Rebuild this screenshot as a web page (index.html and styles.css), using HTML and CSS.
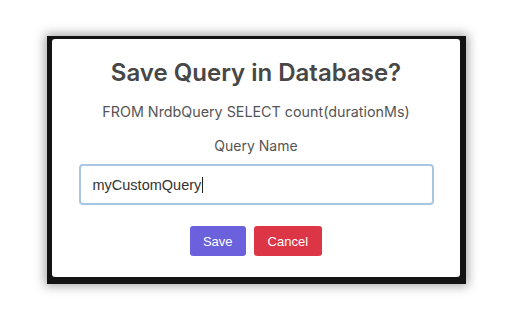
FILE: index.html
```html
<!DOCTYPE html>
<html>
<head>
<meta charset="utf-8">
<link rel="stylesheet" href="styles.css">
</head>
<body>
<div class="frame">
  <div class="dialog">
    <h1 class="title">Save Query in Database?</h1>
    <p class="query">FROM NrdbQuery SELECT count(durationMs)</p>
    <p class="label">Query Name</p>
    <div class="input"><span class="value">myCustomQuery</span><span class="caret"></span></div>
    <div class="actions">
      <button class="btn btn-save">Save</button>
      <button class="btn btn-cancel">Cancel</button>
    </div>
  </div>
</div>
</body>
</html>
```
FILE: styles.css
```css
html, body {
  margin: 0;
  padding: 0;
  background: #fff;
}
body {
  width: 512px;
  height: 320px;
  display: flex;
  align-items: center;
  justify-content: center;
}
.frame {
  background: #141414;
  padding: 3px 6px 7px 5px;
  box-shadow: 0 0 10px 2px rgba(0, 0, 0, 0.35);
  margin-left: 1px;
}
.dialog {
  width: 408px;
  height: 238px;
  box-sizing: border-box;
  background: #fff;
  border-radius: 3px;
  padding: 19px 0 0;
  display: flex;
  flex-direction: column;
  align-items: center;
  font-family: Inter, "Noto Sans", sans-serif;
}
.title {
  margin: 0;
  font-size: 24px;
  line-height: 30px;
  font-weight: 600;
  color: #474747;
}
.query {
  margin: 14px 0 0;
  font-size: 14.3px;
  line-height: 20px;
  color: #555;
}
.label {
  margin: 14px 0 0;
  font-size: 14px;
  line-height: 20px;
  color: #555;
}
.input {
  margin-top: 8px;
  width: 355px;
  height: 41px;
  box-sizing: border-box;
  border: 2px solid #a9c7e2;
  border-radius: 4px;
  padding: 0 12px;
  display: flex;
  align-items: center;
  font-family: "Liberation Sans", Arial, sans-serif;
  font-size: 14.5px;
  color: #333;
}
.caret {
  display: inline-block;
  width: 1px;
  height: 16px;
  background: #222;
  margin-left: 1px;
}
.actions {
  margin-top: 21px;
  display: flex;
  gap: 8px;
}
.btn {
  height: 30px;
  border: none;
  border-radius: 3px;
  padding: 0 13px;
  font-family: "Liberation Sans", Arial, sans-serif;
  font-size: 13px;
  color: #fff;
}
.btn-save {
  background: #6c61dc;
}
.btn-cancel {
  background: #dc3545;
  padding: 0 14px;
}
```
